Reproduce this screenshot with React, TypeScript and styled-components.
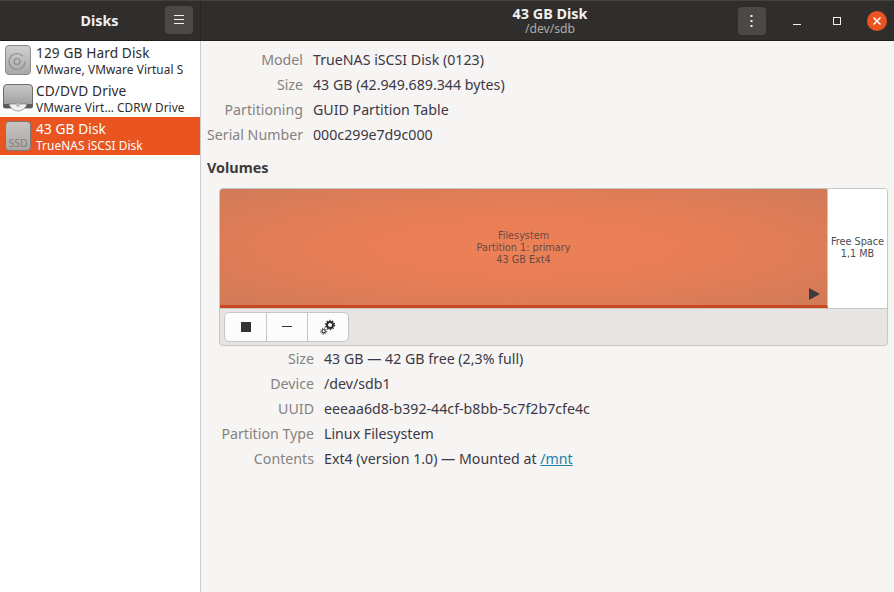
import React from 'react';
import styled, { createGlobalStyle } from 'styled-components';

const Global = createGlobalStyle`
  html, body { margin: 0; padding: 0; width: 894px; height: 592px; overflow: hidden; background: #f6f5f4; }
  body { font-family: "Noto Sans", "Open Sans", sans-serif; }
`;
const Page = styled.div`width: 894px; height: 592px; display: flex; flex-direction: column; overflow: hidden;`;
const Header = styled.header`
  flex: none; display: flex; background: #302e2d;
  border-top: 1px solid #444240; border-bottom: 1px solid #1f1e1d; box-sizing: border-box; height: 41px; color: #fff;
`;
const HeaderLeft = styled.div`
  width: 200px; flex: none; position: relative; display: flex; align-items: center; justify-content: center;
  border-right: 1px solid #252423; font-size: 14.3px; font-weight: 700; color: #f2f1f0;
`;
const HeaderTitle = styled.span`margin-right: 1px;`;
const HeaderRight = styled.div`flex: 1; display: flex; align-items: center; position: relative; padding-left: 537px; box-sizing: border-box;`;
const TitleBlock = styled.div`
  position: absolute; left: 250px; width: 198px; top: 4px; text-align: center; display: flex; flex-direction: column;
`;
const Title = styled.div`font-size: 14.4px; font-weight: 700; color: #f2f1f0; line-height: 17px;`;
const Subtitle = styled.div`font-size: 12.2px; color: #aeaba8; line-height: 13px;`;
const HeaderBtn = styled.button`
  width: 28px; height: 28px; border: 0; padding: 0; border-radius: 4px; background: #4b4947; display: flex; align-items: center; justify-content: center;
`;
const MenuBtn = styled(HeaderBtn)`position: absolute; right: 7px; top: 5px;`;
const WinBtns = styled.div`display: flex; align-items: center; margin-left: 11px;`;
const WinBtn = styled.div`width: 40px; height: 20px; display: flex; align-items: center; justify-content: center;`;
const Close = styled.div`width: 20px; height: 20px; border-radius: 50%; background: #e95420; display: flex; align-items: center; justify-content: center; margin-left: 10px;`;
const Body = styled.div`flex: 1; display: flex; min-height: 0;`;
const Sidebar = styled.aside`width: 200px; flex: none; background: #fff; border-right: 1px solid #cfcdca; display: flex; flex-direction: column;`;
const DiskRow = styled.div<{ $sel?: boolean }>`
  height: 38px; flex: none; display: flex; align-items: center; box-sizing: border-box; padding-left: 2px;
  background: ${p => (p.$sel ? '#e95420' : '#fff')}; color: ${p => (p.$sel ? '#fff' : '#2e2c2b')};
`;
const IconSlot = styled.div`width: 32px; height: 34px; flex: none; margin-right: 2px; display: flex; align-items: center; justify-content: center;`;
const DiskText = styled.div`display: flex; flex-direction: column; min-width: 0; white-space: nowrap; overflow: hidden; width: 162px;`;
const DiskName = styled.div`font-size: 13.7px; line-height: 18px; letter-spacing: .1px;`;
const DiskSub = styled.div`font-size: 11.8px; line-height: 15px; letter-spacing: .1px;`;
const Main = styled.main`flex: 1; min-width: 0; padding: 6px 6px 0 6px; box-sizing: border-box; display: flex; flex-direction: column;`;
const Grid = styled.div<{ $label: number; $indent?: number }>`
  display: grid; grid-template-columns: ${p => p.$label}px 1fr; column-gap: 10px; grid-auto-rows: 25px; align-items: center; font-size: 14.2px;
  padding-left: ${p => p.$indent ?? 0}px;
`;
const Label = styled.div`text-align: right; color: #86827f; white-space: nowrap;`;
const Value = styled.div`color: #3d3846; white-space: nowrap;`;
const Section = styled.div`font-size: 14.4px; font-weight: 700; color: #3d3b3a; margin-top: 8px; line-height: 25px;`;
const VolumeBox = styled.div`
  margin: 8px 0 0 12px; width: 669px; height: 158px; box-sizing: border-box; border: 1px solid #c8c6c3; border-radius: 4px; overflow: hidden; background: #e6e5e4; display: flex; flex-direction: column;
`;
const Map = styled.div`height: 119px; flex: none; display: flex; border-bottom: 1px solid #c8c6c3;`;
const Partition = styled.div`
  width: 607px; flex: none; position: relative; display: flex; align-items: center; justify-content: center; text-align: center;
  background: radial-gradient(ellipse at center, #ec8158 0%, #e97e56 40%, #d17a58 100%);
  border-bottom: 3px solid #c8481f; border-right: 1px solid #c8c6c3; height: 114px; padding-top: 2px;
  font-family: "DejaVu Sans", sans-serif; font-size: 9.7px; line-height: 12px; color: #6a4a40;
`;
const Free = styled.div`
  flex: 1; background: #fff; display: flex; align-items: center; justify-content: center; text-align: center; padding-bottom: 2px;
  font-family: "DejaVu Sans", sans-serif; font-size: 9.7px; line-height: 12px; color: #4a4a55;
`;
const Play = styled.div`position: absolute; right: 7px; bottom: 5px; width: 0; height: 0; border-left: 11px solid #3d3b3a; border-top: 6px solid transparent; border-bottom: 6px solid transparent;`;
const Toolbar = styled.div`padding: 3px 0 0 4px; display: flex;`;
const ToolGroup = styled.div`display: flex; height: 30px; border: 1px solid #c8c6c3; border-radius: 5px; background: #fdfcfc; box-sizing: border-box; overflow: hidden;`;
const ToolBtn = styled.div`width: 41px; box-sizing: border-box; flex: none; display: flex; align-items: center; justify-content: center; & + & { border-left: 1px solid #c8c6c3; }`;
const MountLink = styled.a`color: #1f7fa8; text-decoration: underline;`;

const HardDiskIcon = () => (
  <svg width="26" height="30" viewBox="0 0 26 30">
    <defs><linearGradient id="g1" x1="0" y1="0" x2="0" y2="1"><stop offset="0" stopColor="#d0d0d0"/><stop offset="1" stopColor="#a8a8a8"/></linearGradient></defs>
    <rect x=".5" y=".5" width="25" height="29" rx="3.500" fill="url(#g1)" stroke="#8a8a8a"/>
    <circle cx="12" cy="16.500" r="8" fill="none" stroke="#8c8c8c" strokeWidth="1.2" strokeDasharray="44 6.300"/>
    <circle cx="12" cy="16.500" r="3" fill="none" stroke="#8c8c8c" strokeWidth="1.2"/>
  </svg>
);
const OpticalIcon = () => (
  <svg width="30" height="28" viewBox="0 0 30 28">
    <defs><linearGradient id="g2" x1="0" y1="0" x2="0" y2="1"><stop offset="0" stopColor="#c8c8c8"/><stop offset="1" stopColor="#9a9a9a"/></linearGradient></defs>
    <path d="M4 .5h22a3.500 3.500 0 0 1 3.500 3.500v18a2 2 0 0 1-2 2h-25a2 2 0 0 1-2-2V4A3.500 3.500 0 0 1 4 .5z" fill="url(#g2)" stroke="#6e6e6e"/>
    <path d="M.5 20h29v4H.5z" fill="#5c5c5c"/>
    <path d="M6 20h18c-1 4-5 7-9 7s-8-3-9-7z" fill="#f1f1f1" stroke="#777" strokeWidth=".7"/>
    <circle cx="15" cy="21" r="2" fill="#bbb"/>
  </svg>
);
const SsdIcon = () => (
  <svg width="26" height="30" viewBox="0 0 26 30">
    <defs><linearGradient id="g3" x1="0" y1="0" x2="0" y2="1"><stop offset="0" stopColor="#c6c3c1"/><stop offset="1" stopColor="#aaa7a5"/></linearGradient></defs>
    <rect x=".5" y=".5" width="25" height="29" rx="3.500" fill="url(#g3)" stroke="#7c7774"/>
    <text x="13" y="26" textAnchor="middle" fontSize="10.500" fontFamily="Noto Sans, sans-serif" fill="#837f7c">SSD</text>
  </svg>
);
const Gears = () => (
  <svg width="16" height="16" viewBox="0 0 16 16" fill="none" stroke="#2e2c2b">
    <circle cx="10" cy="6" r="3" strokeWidth="2"/>
    <circle cx="10" cy="6" r="4.600" strokeWidth="1.2" strokeDasharray="1.400 1.500"/>
    <circle cx="3.700" cy="12.200" r="1.700" strokeWidth="1.100"/>
    <circle cx="3.700" cy="12.200" r="3" strokeWidth="1" strokeDasharray="1 1"/>
  </svg>
);

export default function App() {
  return (
    <Page>
      <Global />
      <Header>
        <HeaderLeft>
          <HeaderTitle>Disks</HeaderTitle>
          <MenuBtn>
            <svg width="14" height="12" viewBox="0 0 14 12" fill="#f2f1f0"><rect x="2" y="1" width="10" height="1"/><rect x="2" y="5" width="10" height="1"/><rect x="2" y="9" width="10" height="1"/></svg>
          </MenuBtn>
        </HeaderLeft>
        <HeaderRight>
          <TitleBlock><Title>43 GB Disk</Title><Subtitle>/dev/sdb</Subtitle></TitleBlock>
          <HeaderBtn>
            <svg width="4" height="14" viewBox="0 0 4 14" fill="#f2f1f0"><rect x="0.500" y="1" width="2" height="2"/><rect x="0.500" y="6" width="2" height="2"/><rect x="0.500" y="11" width="2" height="2"/></svg>
          </HeaderBtn>
          <WinBtns>
            <WinBtn><svg width="10" height="10" viewBox="0 0 10 10"><rect x="1" y="8" width="8" height="1" fill="#f2f1f0"/></svg></WinBtn>
            <WinBtn><svg width="10" height="10" viewBox="0 0 10 10"><rect x="1.500" y="1.500" width="7" height="7" fill="none" stroke="#f2f1f0"/></svg></WinBtn>
            <Close><svg width="10" height="10" viewBox="0 0 10 10" stroke="#fff" strokeWidth="1.500"><path d="M1.500 1.500l7 7M8.500 1.500l-7 7"/></svg></Close>
          </WinBtns>
        </HeaderRight>
      </Header>
      <Body>
        <Sidebar>
          <DiskRow>
            <IconSlot><HardDiskIcon /></IconSlot>
            <DiskText><DiskName>129 GB Hard Disk</DiskName><DiskSub>VMware, VMware Virtual S</DiskSub></DiskText>
          </DiskRow>
          <DiskRow>
            <IconSlot><OpticalIcon /></IconSlot>
            <DiskText><DiskName>CD/DVD Drive</DiskName><DiskSub>VMware Virt… CDRW Drive</DiskSub></DiskText>
          </DiskRow>
          <DiskRow $sel>
            <IconSlot><SsdIcon /></IconSlot>
            <DiskText><DiskName>43 GB Disk</DiskName><DiskSub>TrueNAS iSCSI Disk</DiskSub></DiskText>
          </DiskRow>
        </Sidebar>
        <Main>
          <Grid $label={96}>
            <Label>Model</Label><Value>TrueNAS iSCSI Disk (0123)</Value>
            <Label>Size</Label><Value>43 GB (42.949.689.344 bytes)</Value>
            <Label>Partitioning</Label><Value>GUID Partition Table</Value>
            <Label>Serial Number</Label><Value>000c299e7d9c000</Value>
          </Grid>
          <Section>Volumes</Section>
          <VolumeBox>
            <Map>
              <Partition>
                <div>Filesystem<br />Partition 1: primary<br />43 GB Ext4</div>
                <Play />
              </Partition>
              <Free><div>Free Space<br />1,1 MB</div></Free>
            </Map>
            <Toolbar>
              <ToolGroup>
                <ToolBtn><svg width="10" height="10"><rect width="10" height="10" fill="#333"/></svg></ToolBtn>
                <ToolBtn><svg width="10" height="2"><rect width="10" height="1" fill="#333"/></svg></ToolBtn>
                <ToolBtn><Gears /></ToolBtn>
              </ToolGroup>
            </Toolbar>
          </VolumeBox>
          <Grid $label={95} $indent={12}>
            <Label>Size</Label><Value>43 GB — 42 GB free (2,3% full)</Value>
            <Label>Device</Label><Value>/dev/sdb1</Value>
            <Label>UUID</Label><Value>eeeaa6d8-b392-44cf-b8bb-5c7f2b7cfe4c</Value>
            <Label>Partition Type</Label><Value>Linux Filesystem</Value>
            <Label>Contents</Label><Value>Ext4 (version 1.0) — Mounted at <MountLink>/mnt</MountLink></Value>
          </Grid>
        </Main>
      </Body>
    </Page>
  );
}
